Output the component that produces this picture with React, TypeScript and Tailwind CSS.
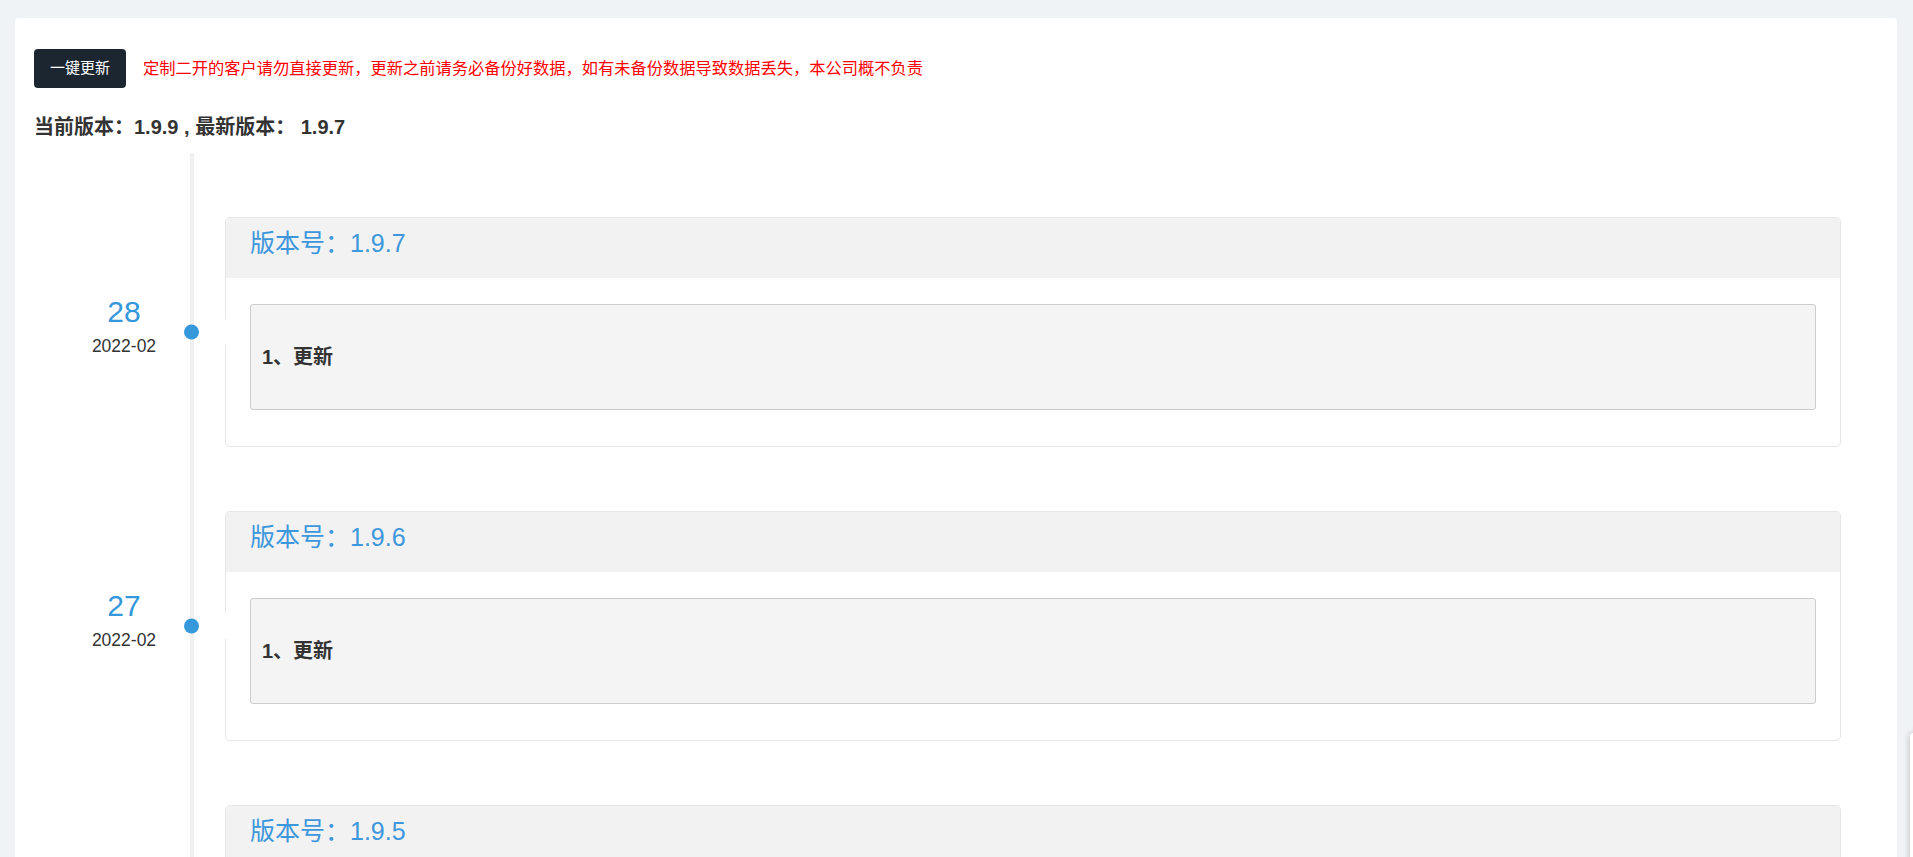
import React from 'react';

interface Release {
  day: string;
  month: string;
  version: string;
  notes: string[];
}

const RELEASES: Release[] = [
  { day: '28', month: '2022-02', version: '1.9.7', notes: ['1、更新'] },
  { day: '27', month: '2022-02', version: '1.9.6', notes: ['1、更新'] },
  { day: '26', month: '2022-02', version: '1.9.5', notes: ['1、更新'] },
];

const FONT = "font-['Liberation_Sans','Noto_Sans_CJK_SC',sans-serif]";

const TimelineItem: React.FC<{ item: Release }> = ({ item }) => (
  <div className="flex">
    {/* date column */}
    <div className="flex w-[156px] shrink-0 flex-col items-center justify-center pt-[64px] pb-[11px] pl-[24px]">
      <div className="text-[30px] leading-[30px] text-[#3498db]">{item.day}</div>
      <div className="mt-[9px] text-[17.5px] leading-[20px] text-[#333]">{item.month}</div>
    </div>

    {/* line + card */}
    <div className="flex-1 border-l-4 border-[#f0f0f0] pt-[64px] pl-[31px]">
      <div className="relative rounded-[5px] border border-[#e6e6e6] bg-white">
        <span className="absolute top-1/2 left-[-42px] h-[15px] w-[15px] -translate-y-1/2 rounded-full bg-[#3498db]" />
        <span className="absolute top-1/2 left-[-2px] h-[26px] w-[3px] -translate-y-1/2 bg-white" />
        <div className="flex h-[60px] items-center rounded-t-[5px] bg-[#f2f2f2] px-[24px] pb-[8px] text-[25px] text-[#3c97dd]">
          版本号：{item.version}
        </div>
        <div className="px-[24px] pt-[26px] pb-[36px]">
          <div className="flex h-[106px] items-center rounded-[3px] border border-[#ccc] bg-[#f4f4f4] px-[11px]">
            {item.notes.map((n) => (
              <div key={n} className="text-[20px] font-bold text-[#333]">
                {n}
              </div>
            ))}
          </div>
        </div>
      </div>
    </div>
  </div>
);

export default function App() {
  return (
    <div className={`relative h-screen overflow-hidden bg-[#f0f3f6] pt-[18px] pr-[16px] pl-[15px] ${FONT}`}>
      <div className="min-h-full rounded-t-[4px] bg-white pt-[31px] pr-[56px] pl-[19px]">
        <div className="flex items-center">
          <button className="h-[39px] w-[92px] rounded-[4px] bg-[#1b2631] text-[15px] text-white">一键更新</button>
          <span className="ml-[17px] text-[16.25px] text-[#ff0000]">
            定制二开的客户请勿直接更新，更新之前请务必备份好数据，如有未备份数据导致数据丢失，本公司概不负责
          </span>
        </div>

        <div className="mt-[25px] text-[20px] leading-[28px] font-bold text-[#333]">
          当前版本：1.9.9 , 最新版本： 1.9.7
        </div>

        <div className="mt-[12px]">
          {RELEASES.map((r) => (
            <TimelineItem key={r.version} item={r} />
          ))}
        </div>
      </div>

      {/* floating widget peeking in at the right edge */}
      <div className="absolute top-[733px] left-[1910px] h-[200px] w-[40px] rounded-l-[3px] bg-white shadow-[0_0_6px_rgba(0,0,0,0.25)]" />
    </div>
  );
}
